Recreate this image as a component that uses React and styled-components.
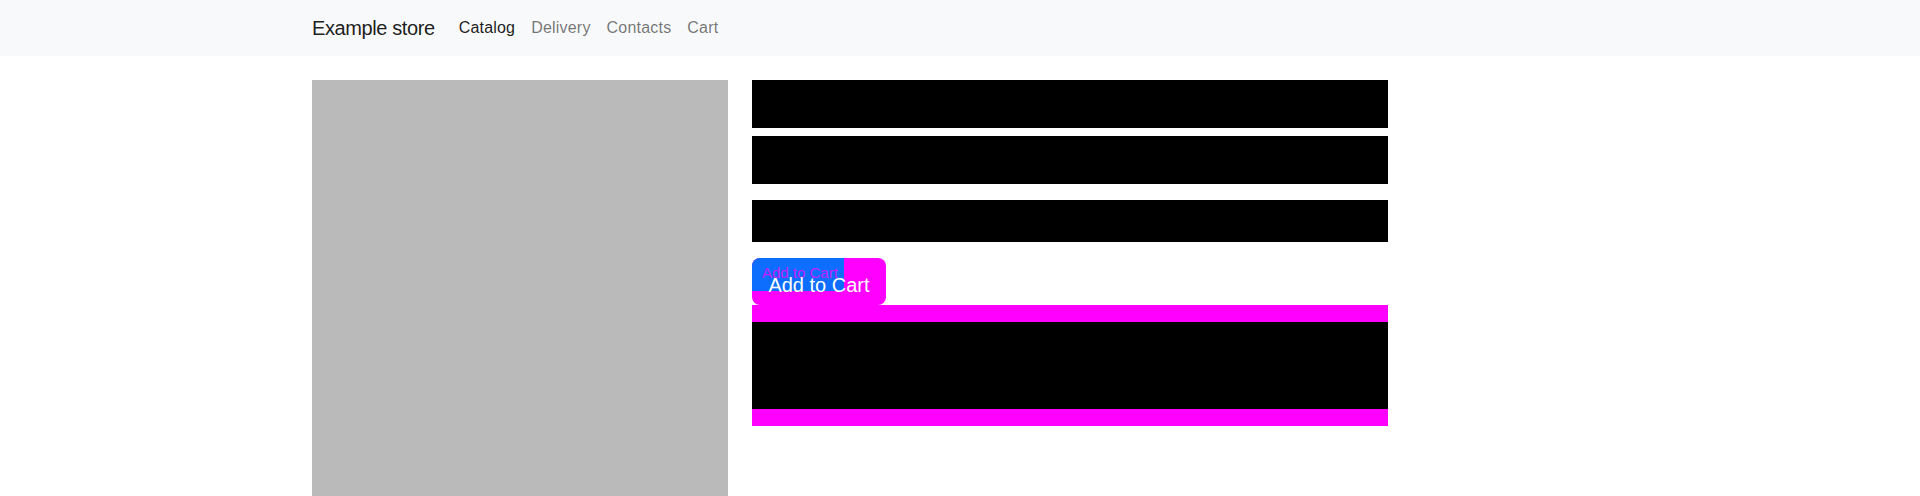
import React from "react";
import styled, { createGlobalStyle } from "styled-components";

const GlobalStyle = createGlobalStyle`
  * { box-sizing: border-box; }
  body {
    margin: 0;
    background: #fff;
    font-family: "Liberation Sans", Arial, sans-serif;
    color: #212529;
  }
`;

const Navbar = styled.nav`
  background-color: #f8f9fa;
  padding: 8px 0;
`;

const NavContainer = styled.div`
  max-width: 1320px;
  margin: 0 auto;
  padding: 0 12px;
  display: flex;
  align-items: center;
`;

const Brand = styled.a`
  font-size: 20px;
  line-height: 30px;
  padding: 5px 0;
  margin-right: 16px;
  letter-spacing: -0.4px;
  color: rgba(0, 0, 0, 0.9);
  text-decoration: none;
`;

const NavList = styled.div`
  display: flex;
`;

const NavItem = styled.a`
  padding: 8px;
  font-size: 16px;
  line-height: 24px;
  letter-spacing: 0.2px;
  text-decoration: none;
  color: ${(p) => (p.$active ? "rgba(0, 0, 0, 0.9)" : "rgba(0, 0, 0, 0.55)")};
`;

const Main = styled.main`
  max-width: 1320px;
  margin: 24px auto 0;
  padding: 0 12px;
  display: flex;
  gap: 24px;
`;

const Picture = styled.div`
  width: 416px;
  height: 416px;
  flex-shrink: 0;
  background-color: #bababa;
`;

const Details = styled.div`
  width: 636px;
  display: flex;
  flex-direction: column;
`;

const Bar = styled.div`
  height: ${(p) => p.$h}px;
  margin-bottom: ${(p) => p.$mb}px;
  background: #000;
`;

const CartButton = styled.button`
  position: relative;
  align-self: flex-start;
  width: 134px;
  height: 47px;
  padding: 0 16px;
  border: none;
  border-radius: 8px;
  background: #ff00ff;
  color: #fff;
  font-family: inherit;
  font-size: 20px;
  line-height: 30px;
  overflow: hidden;
  cursor: pointer;

  &::before {
    content: "";
    position: absolute;
    left: 0;
    top: 0;
    width: 92px;
    height: 33px;
    background: #0d6efd;
  }
`;

const ButtonLabel = styled.span`
  position: relative;
  top: 3px;
`;

const Ghost = styled.span`
  position: absolute;
  left: 10px;
  top: 6px;
  font-size: 15px;
  line-height: 18px;
  color: rgba(255, 0, 255, 0.75);
  white-space: nowrap;
`;

const Description = styled.div`
  background: #ff00ff;
  padding: 17px 0;
`;

const DescriptionBody = styled.div`
  height: 87px;
  background: #000;
`;

export default function App() {
  const links = ["Catalog", "Delivery", "Contacts", "Cart"];
  return (
    <>
      <GlobalStyle />
      <Navbar>
        <NavContainer>
          <Brand href="#">Example store</Brand>
          <NavList>
            {links.map((l, i) => (
              <NavItem href="#" key={l} $active={i === 0}>
                {l}
              </NavItem>
            ))}
          </NavList>
        </NavContainer>
      </Navbar>
      <Main>
        <Picture />
        <Details>
          <Bar $h={48} $mb={8} />
          <Bar $h={48} $mb={16} />
          <Bar $h={42} $mb={16} />
          <CartButton>
            <Ghost>Add to Cart</Ghost>
            <ButtonLabel>Add to Cart</ButtonLabel>
          </CartButton>
          <Description>
            <DescriptionBody />
          </Description>
        </Details>
      </Main>
    </>
  );
}
